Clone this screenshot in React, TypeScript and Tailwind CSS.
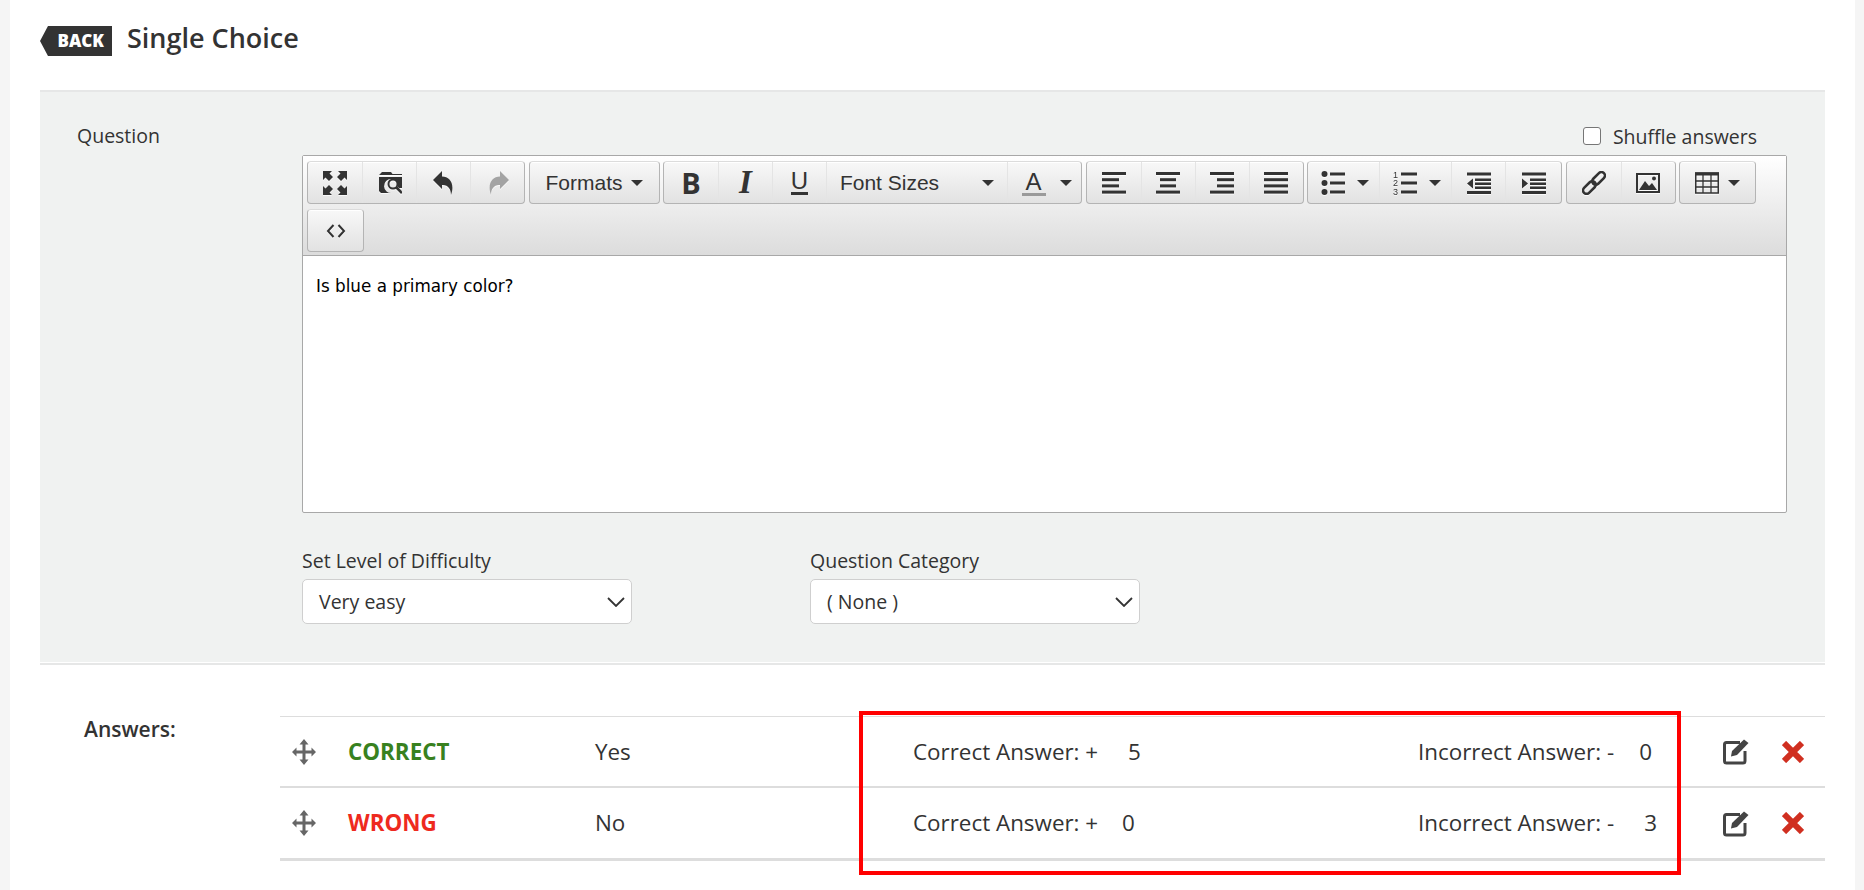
import type { ReactNode } from "react";

const ink = "#333333";

function Caret() {
  return (
    <svg width="12" height="6" viewBox="0 0 12 6" className="shrink-0">
      <path d="M0 0h12L6 6z" fill={ink} />
    </svg>
  );
}

function Icon({ children, w = 24, h = 24 }: { children: ReactNode; w?: number; h?: number }) {
  return (
    <svg
      width={w}
      height={h}
      viewBox={`0 0 ${w} ${h}`}
      className="shrink-0 drop-shadow-[0_1px_0_rgba(255,255,255,0.8)]"
      fill={ink}
    >
      {children}
    </svg>
  );
}

function Btn({ children, className = "w-[54px]" }: { children: ReactNode; className?: string }) {
  return (
    <div className={`flex h-full items-center justify-center border-l border-[#e4e4e4] first:border-l-0 ${className}`}>
      {children}
    </div>
  );
}

function Group({ children, className = "" }: { children: ReactNode; className?: string }) {
  return (
    <div
      className={`flex h-[43px] rounded-[4px] border border-[#b4b4b4] border-t-[#dcdcdc] bg-gradient-to-b from-[#f8f8f8] to-[#e2e2e2] shadow-[0_1px_0_#fff_inset] ${className}`}
    >
      {children}
    </div>
  );
}

const Bars = ({ rows }: { rows: [number, number][] }) => (
  <Icon>
    {rows.map(([x, w], i) => (
      <rect key={i} x={x} y={1 + i * 6.2} width={w} height={3} />
    ))}
  </Icon>
);

function Toolbar() {
  return (
    <div className="flex flex-wrap content-start gap-x-[3.500px] gap-y-[5px] border-b border-[#a8a8a8] bg-gradient-to-b from-[#ffffff] to-[#dcdcdc] pl-[4px] pt-[5px] h-[100px]">
      <Group>
        <Btn>
          <Icon>
            <path d="M0 0h9L6.500 2.500 10 6 6 10 2.500 6.500 0 9z" />
            <path d="M24 0h-9l2.500 2.500L14 6l4 4 3.500-3.500L24 9z" />
            <path d="M0 24h9l-2.500-2.500L10 18l-4-4-3.500 3.500L0 15z" />
            <path d="M24 24h-9l2.500-2.500L14 18l4-4 3.500 3.500L24 15z" />
          </Icon>
        </Btn>
        <Btn>
          <Icon>
            <path d="M4 1h9l1.500 2H24v1H1z" />
            <path d="M1 6h23v11l-3 0-1-1a7 7 0 1 0-6 6H3l-2-2z" />
            <circle cx="15" cy="13" r="4.500" fill="none" stroke={ink} strokeWidth="2" />
            <path d="M18 16l6 6" stroke={ink} strokeWidth="2.600" />
          </Icon>
        </Btn>
        <Btn>
          <Icon>
            <path d="M1 9L10 0v5.500C18 5.500 23 13 19 24c0-6-3-10.500-9-10v4z" />
          </Icon>
        </Btn>
        <Btn>
          <Icon>
            <path d="M23 9L14 0v5.500C6 5.500 1 13 5 24c0-6 3-10.500 9-10v4z" fill="#a3a3a3" />
          </Icon>
        </Btn>
      </Group>

      <Group className="w-[131px]">
        <Btn className="w-full gap-[8px]">
          <span className="font-['Liberation_Sans',sans-serif] text-[21px] text-[#333]">Formats</span>
          <Caret />
        </Btn>
      </Group>

      <Group>
        <Btn>
          <span className="font-['Open_Sans',sans-serif] text-[29px] font-bold leading-none text-[#333]">B</span>
        </Btn>
        <Btn>
          <span className="font-['Liberation_Serif',serif] text-[33px] font-bold italic leading-none text-[#333]">I</span>
        </Btn>
        <Btn>
          <span className="border-b-[3px] border-[#333] font-['Liberation_Sans',sans-serif] text-[24px] leading-[22px] text-[#333]">U</span>
        </Btn>
        <Btn className="w-[181px] gap-[43px]">
          <span className="font-['Liberation_Sans',sans-serif] text-[21px] text-[#333]">Font Sizes</span>
          <Caret />
        </Btn>
        <Btn className="w-[74px] gap-[14px] pl-[4px]">
          <span className="w-[24px] border-b-[3px] border-[#9a9a9a] text-center font-['Liberation_Sans',sans-serif] text-[24px] leading-[23px] text-[#333]">A</span>
          <Caret />
        </Btn>
      </Group>

      <Group>
        <Btn>
          <Bars rows={[[0, 24], [0, 17], [0, 17], [0, 24]]} />
        </Btn>
        <Btn>
          <Bars rows={[[0, 24], [4, 16], [4, 16], [0, 24]]} />
        </Btn>
        <Btn>
          <Bars rows={[[0, 24], [7, 17], [7, 17], [0, 24]]} />
        </Btn>
        <Btn>
          <Bars rows={[[0, 24], [0, 24], [0, 24], [0, 24]]} />
        </Btn>
      </Group>

      <Group>
        <Btn className="w-[71px] gap-[12px] pl-[3px]">
          <Icon>
            <circle cx="3.500" cy="3" r="3" />
            <circle cx="3.500" cy="12" r="3" />
            <circle cx="3.500" cy="21" r="3" />
            <rect x="9" y="1.500" width="15" height="3" />
            <rect x="9" y="10.500" width="15" height="3" />
            <rect x="9" y="19.500" width="15" height="3" />
          </Icon>
          <Caret />
        </Btn>
        <Btn className="w-[72px] gap-[12px] pl-[3px]">
          <Icon>
            <text x="0" y="7" fontSize="9" fontFamily="Liberation Sans, sans-serif">1</text>
            <text x="0" y="15" fontSize="9" fontFamily="Liberation Sans, sans-serif">2</text>
            <text x="0" y="23.500" fontSize="9" fontFamily="Liberation Sans, sans-serif">3</text>
            <rect x="8" y="1.500" width="16" height="3" />
            <rect x="8" y="10.500" width="16" height="3" />
            <rect x="8" y="19.500" width="16" height="3" />
          </Icon>
          <Caret />
        </Btn>
        <Btn>
          <Icon>
            <rect x="0" y="1.500" width="24" height="3" />
            <rect x="8" y="7.500" width="16" height="2.500" />
            <rect x="8" y="11.500" width="16" height="2.500" />
            <rect x="8" y="15.500" width="16" height="2.500" />
            <rect x="0" y="20" width="24" height="3" />
            <path d="M6 7.500v10L0 12.500z" />
          </Icon>
        </Btn>
        <Btn className="w-[56px]">
          <Icon>
            <rect x="0" y="1.500" width="24" height="3" />
            <rect x="8" y="7.500" width="16" height="2.500" />
            <rect x="8" y="11.500" width="16" height="2.500" />
            <rect x="8" y="15.500" width="16" height="2.500" />
            <rect x="0" y="20" width="24" height="3" />
            <path d="M0 7.500v10l6-5z" />
          </Icon>
        </Btn>
      </Group>

      <Group>
        <Btn>
          <Icon>
            <g transform="rotate(-45 12 12)" fill="none" stroke={ink} strokeWidth="2.600">
              <rect x="-2" y="8.500" width="15" height="7" rx="3.500" />
              <rect x="11" y="8.500" width="15" height="7" rx="3.500" />
            </g>
          </Icon>
        </Btn>
        <Btn>
          <Icon>
            <rect x="1" y="3" width="22" height="18" fill="none" stroke={ink} strokeWidth="2" />
            <path d="M3 19l6-9 4 5 3-3 5 7z" />
            <circle cx="18" cy="7.500" r="2" />
          </Icon>
        </Btn>
      </Group>

      <Group className="w-[77px]">
        <Btn className="w-full gap-[9px]">
          <Icon>
            <rect x="0.750" y="2" width="22.500" height="20" fill="none" stroke={ink} strokeWidth="1.500" />
            <rect x="0" y="1.500" width="24" height="3" />
            <path d="M8 4v18M16 4v18M1 10h22M1 16h22" stroke={ink} strokeWidth="1.300" />
          </Icon>
          <Caret />
        </Btn>
      </Group>

      <Group className="w-[57px]">
        <Btn className="w-full">
          <Icon w={20} h={14}>
            <path d="M7.500 1L2 7l5.500 6M12.500 1L18 7l-5.500 6" fill="none" stroke={ink} strokeWidth="2" />
          </Icon>
        </Btn>
      </Group>
    </div>
  );
}

function FakeSelect({ value, label, className }: { value: string; label: string; className: string }) {
  return (
    <div className={className}>
      <div className="mb-[6px] h-[25px] text-[19.500px] leading-[25px]">{label}</div>
      <div className="flex h-[45px] items-center justify-between rounded-[5px] border border-[#cfcfcf] bg-white pl-[16px] pr-[6px] text-[19.500px]">
        <span>{value}</span>
        <svg width="18" height="10" viewBox="0 0 18 10" fill="none" stroke="#333" strokeWidth="1.800">
          <path d="M1 1l8 8 8-8" />
        </svg>
      </div>
    </div>
  );
}

function MoveIcon() {
  return (
    <svg width="24" height="26" viewBox="0 0 24 26" fill="#666666">
      <path d="M12 0l4.500 5.500h-3v6h6V8.500L24 13l-4.500 4.500v-3h-6v6h3L12 26l-4.500-5.500h3v-6h-6v3L0 13l4.500-4.500v3h6v-6h-3z" />
    </svg>
  );
}

function EditIcon() {
  return (
    <svg width="27" height="27" viewBox="0 0 27 27" fill="none">
      <path d="M17 4.500H3.500a2 2 0 0 0-2 2V23a2 2 0 0 0 2 2H20a2 2 0 0 0 2-2V13" stroke="#444" strokeWidth="3" />
      <path d="M9 13L21 1.500 25.500 5 14 17l-6 1.500z" fill="#444" />
    </svg>
  );
}

function DeleteIcon() {
  return (
    <svg width="22" height="22" viewBox="0 0 22 22">
      <path d="M2 2l18 18M20 2L2 20" stroke="#d02f20" strokeWidth="6" />
    </svg>
  );
}

const answers = [
  {
    tag: "CORRECT",
    tagClass: "text-[#38811f]",
    text: "Yes",
    plus: "5",
    plusClass: "ml-[30px]",
    minus: "0",
    minusClass: "ml-[25px]",
    rowClass: "h-[70px] border-t border-[#dddddd]",
  },
  {
    tag: "WRONG",
    tagClass: "text-[#ee2a1e]",
    text: "No",
    plus: "0",
    plusClass: "ml-[24px]",
    minus: "3",
    minusClass: "ml-[30px]",
    rowClass: "h-[72px] border-t-2 border-[#dddddd]",
  },
];

export default function App() {
  return (
    <div className="h-[890px] overflow-hidden bg-[#f5f5f5] pl-[10px] pr-[9px] font-['Open_Sans',sans-serif] text-[#333]">
      <div className="h-full bg-white px-[30px]">
        {/* HEADER */}
        <div className="flex h-[92px] items-start gap-[15px] border-b-2 border-[#e6e7e7] pt-[26px]">
          <div className="flex h-[30px] w-[72px] items-center justify-end bg-[#333] pr-[8px] text-[17px] font-extrabold text-white [clip-path:polygon(8px_0,100%_0,100%_100%,8px_100%,0_50%)]">
            BACK
          </div>
          <h1 className="mt-[-1px] text-[27px] font-semibold leading-[26px]">Single Choice</h1>
        </div>

        {/* QUESTION */}
        <div className="flex h-[570px] bg-[#f0f2f1] pl-[37px] pr-[38px]">
          <div className="w-[225px] pt-[31px] text-[19.500px] leading-[25px]">Question</div>
          <div className="flex-1">
            <div className="flex h-[63px] items-start justify-end gap-[12px] pr-[30px] pt-[32px] text-[19.500px] leading-[25px]">
              <span className="mt-[3px] h-[18px] w-[18px] rounded-[3px] border border-[#767676] bg-white" />
              Shuffle answers
            </div>
            <div className="h-[358px] rounded-[2px] border border-[#a8a8a8] bg-white">
              <Toolbar />
              <div className="pl-[13px] pt-[18px] font-['DejaVu_Sans',sans-serif] text-[16.800px] leading-[24px] text-black">
                Is blue a primary color?
              </div>
            </div>
            <div className="mt-[35px] flex">
              <FakeSelect label="Set Level of Difficulty" value="Very easy" className="w-[330px]" />
              <FakeSelect label="Question Category" value="( None )" className="ml-[178px] w-[330px]" />
            </div>
          </div>
        </div>
        <div className="h-[3px] border-t border-white bg-[#e6e7e7]" />

        {/* ANSWERS */}
        <div className="flex pt-[51px]">
          <div className="w-[240px] pl-[44px] text-[21px] font-semibold leading-[26px]">Answers:</div>
          <div className="relative flex-1">
            {answers.map((a) => (
              <div
                key={a.tag}
                className={`grid grid-cols-[68px_247px_318px_505px_305px_59px_1fr] items-center text-[22.400px] ${a.rowClass}`}
              >
                <div className="pl-[12px]">
                  <MoveIcon />
                </div>
                <div className={`font-bold ${a.tagClass}`}>{a.tag}</div>
                <div>{a.text}</div>
                <div>
                  Correct Answer: +<span className={a.plusClass}>{a.plus}</span>
                </div>
                <div>
                  Incorrect Answer: -<span className={a.minusClass}>{a.minus}</span>
                </div>
                <div>
                  <EditIcon />
                </div>
                <div>
                  <DeleteIcon />
                </div>
              </div>
            ))}
            <div className="h-[3px] bg-[#dddddd]" />
            <div className="absolute left-[579px] top-[-5px] h-[164px] w-[822px] border-4 border-[#ff0000]" />
          </div>
        </div>
      </div>
    </div>
  );
}
